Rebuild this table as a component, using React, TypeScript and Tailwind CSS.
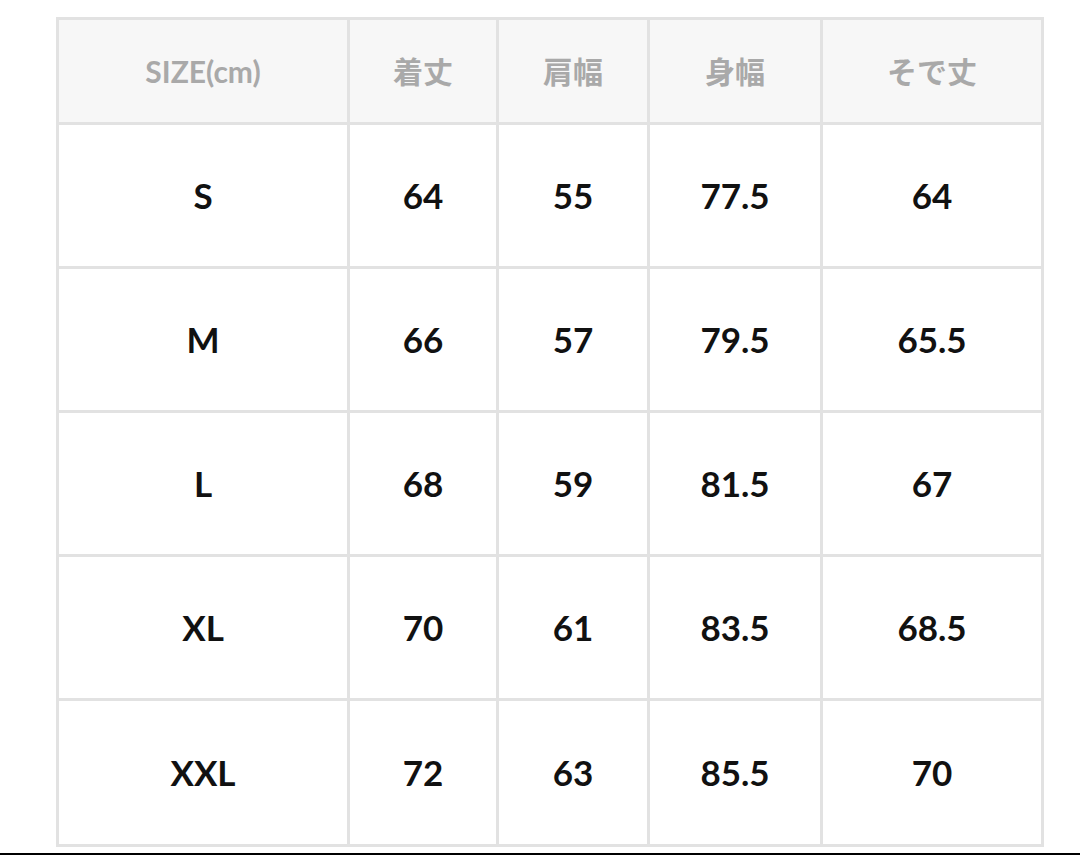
const headers = ["SIZE(cm)", "着丈", "肩幅", "身幅", "そで丈"];

const rows = [
  ["S", "64", "55", "77.5", "64"],
  ["M", "66", "57", "79.5", "65.5"],
  ["L", "68", "59", "81.5", "67"],
  ["XL", "70", "61", "83.5", "68.5"],
  ["XXL", "72", "63", "85.5", "70"],
];

export default function App() {
  return (
    <div
      className="bg-white w-[1080px] h-[855px] overflow-hidden"
      style={{ fontFamily: 'Lato, "Noto Sans CJK JP", sans-serif' }}
    >
      <div className="pt-[17px] pl-[56px]">
        {/* Size table */}
        <div className="w-[988px] grid grid-cols-[288px_146px_148px_170px_218px] grid-rows-[102px_repeat(4,141px)_143px] gap-[3px] p-[3px] bg-[#e2e2e2]">
          {headers.map((h) => (
            <div key={h} className="bg-[#f7f7f7] flex items-center justify-center text-[30px] font-bold text-[#a9a9a9]">
              {h}
            </div>
          ))}
          {rows.map((r) =>
            r.map((v, i) => (
              <div key={r[0] + i} className="bg-white flex items-center justify-center text-[35px] font-bold text-[#111111]">
                {v}
              </div>
            ))
          )}
        </div>
      </div>
      <div className="mt-[6px] h-[3px] bg-black" />
    </div>
  );
}
